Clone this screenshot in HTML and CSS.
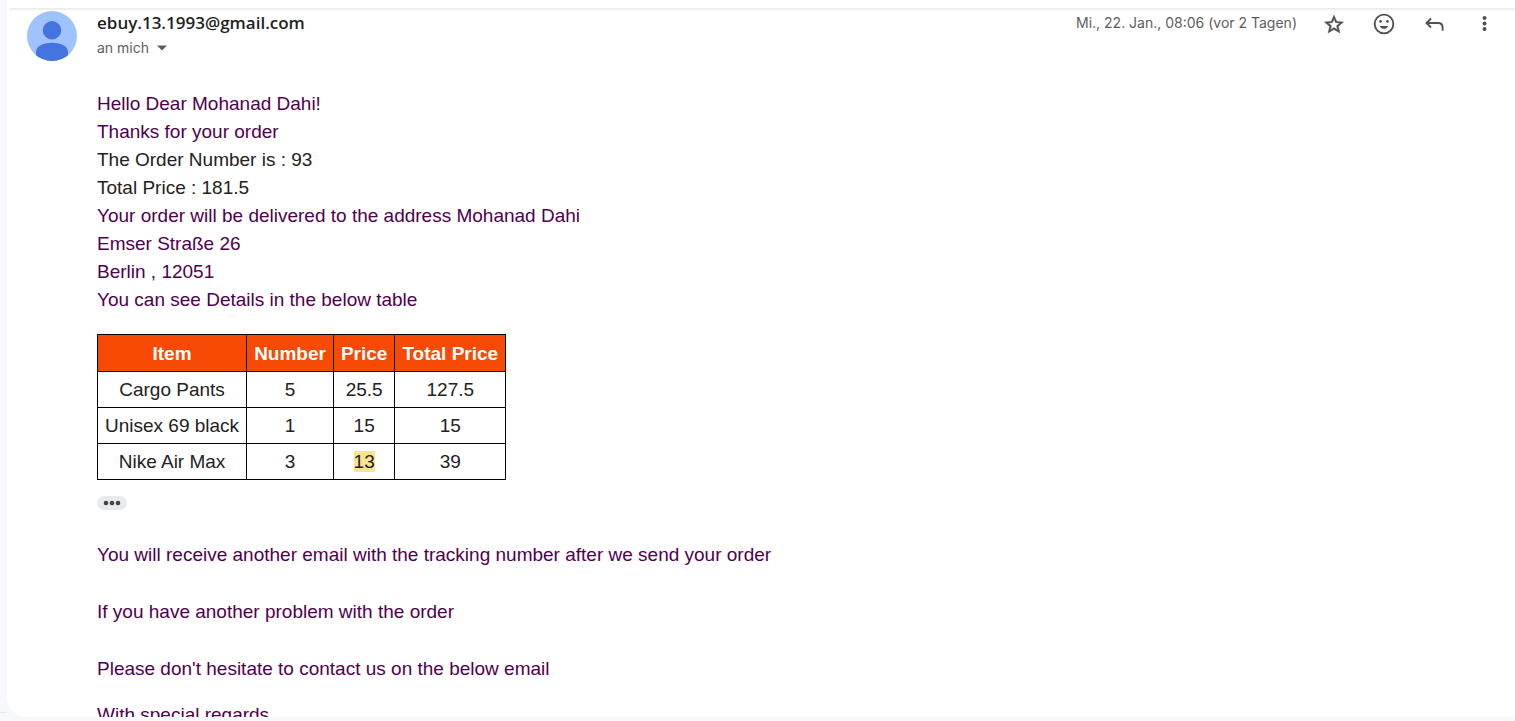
FILE: index.html
```html
<!DOCTYPE html>
<html lang="de">
<head>
<meta charset="utf-8">
<meta name="viewport" content="width=device-width, initial-scale=1">
<title>E-Mail</title>
<link rel="stylesheet" href="styles.css">
</head>
<body>
<div class="app">
  <div class="rail"></div>
  <main class="card">
    <div class="toolbar-edge"></div>
    <article class="message">
      <svg class="avatar" viewBox="0 0 50 50" aria-hidden="true">
        <defs><clipPath id="disc"><circle cx="25" cy="25" r="25"/></clipPath></defs>
        <g clip-path="url(#disc)">
          <rect width="50" height="50" fill="#a0c3ff"/>
          <circle cx="25" cy="19.2" r="9.2" fill="#4374e0"/>
          <path d="M9 50V41.500C9 34.500 17 31.700 25 31.700S41 34.500 41 41.500V50Z" fill="#4374e0"/>
        </g>
      </svg>
      <div class="content">
        <header class="header">
          <div class="sender">
            <h1 class="sender-name">ebuy.13.1993@gmail.com</h1>
            <button class="recipient" type="button">an mich
              <svg class="caret" viewBox="0 0 10 6" aria-hidden="true"><path d="M0 .5H10L5 5.500Z"/></svg>
            </button>
          </div>
          <div class="meta">
            <time class="date">Mi., 22. Jan., 08:06 (vor 2 Tagen)</time>
            <button class="icon-button" type="button" aria-label="Markieren">
              <svg class="icon" viewBox="0 0 24 24"><path stroke="currentColor" stroke-width=".5" d="m21.500 10-6.700-.6L12 3.200 9.200 9.400 2.500 10l5.100 4.400L6.100 21 12 17.500 17.900 21l-1.530-6.600zM12 15.600l-3.500 2.100.93-4-3.100-2.700 4.100-.36L12 6.900l1.600 3.740 4.100.36-3.100 2.700.93 4z"/></svg>
            </button>
            <button class="icon-button" type="button" aria-label="Reaktion hinzufügen">
              <svg class="icon" viewBox="0 0 24 24"><path fill-rule="evenodd" d="M12 1.700a10.300 10.300 0 1 0 0 20.600 10.300 10.300 0 0 0 0-20.600ZM12 3.600a8.400 8.400 0 1 1 0 16.800 8.400 8.400 0 0 1 0-16.800Z"/><circle cx="8.500" cy="9.400" r="1.300"/><circle cx="15.500" cy="9.400" r="1.300"/><path d="M7.700 14H16.300C15.500 15.900 14 16.800 12 16.800S8.500 15.900 7.700 14Z"/></svg>
            </button>
            <button class="icon-button" type="button" aria-label="Antworten">
              <svg class="icon" viewBox="0 0 24 24"><path d="M9 6.500 4.500 11 9 15.500M5 11H16Q20.600 11 20.600 15.500V18.800" fill="none" stroke="currentColor" stroke-width="1.900"/></svg>
            </button>
            <button class="icon-button" type="button" aria-label="Mehr">
              <svg class="icon" viewBox="0 0 24 24"><circle cx="12.500" cy="6" r="2"/><circle cx="12.500" cy="11.500" r="2"/><circle cx="12.500" cy="17" r="2"/></svg>
            </button>
          </div>
        </header>
        <div class="body">
          <p class="line quoted">Hello Dear Mohanad Dahi!</p>
          <p class="line quoted">Thanks for your order</p>
          <p class="line">The Order Number is : 93</p>
          <p class="line">Total Price : 181.5</p>
          <p class="line quoted">Your order will be delivered to the address Mohanad Dahi</p>
          <p class="line quoted">Emser Straße 26</p>
          <p class="line quoted">Berlin , 12051</p>
          <p class="line quoted">You can see Details in the below table</p>
          <table class="order">
            <thead><tr><th>Item</th><th>Number</th><th>Price</th><th>Total Price</th></tr></thead>
            <tbody>
              <tr><td>Cargo Pants</td><td>5</td><td>25.5</td><td>127.5</td></tr>
              <tr><td>Unisex 69 black</td><td>1</td><td>15</td><td>15</td></tr>
              <tr><td>Nike Air Max</td><td>3</td><td><mark class="hit">13</mark></td><td>39</td></tr>
            </tbody>
          </table>
          <button class="trim" type="button" aria-label="Gekürzten Inhalt einblenden">
            <svg class="trim-dots" viewBox="0 0 18 6" aria-hidden="true"><circle cx="3" cy="3" r="2.300"/><circle cx="9" cy="3" r="2.300"/><circle cx="15" cy="3" r="2.300"/></svg>
          </button>
          <div class="closing">
            <p class="line quoted">You will receive another email with the tracking number after we send your order</p>
            <p class="line quoted">If you have another problem with the order</p>
            <p class="line quoted">Please don't hesitate to contact us on the below email</p>
          </div>
          <p class="line quoted regards">With special regards</p>
        </div>
      </div>
    </article>
  </main>
</div>
</body>
</html>
```
FILE: styles.css
```css
* {
  box-sizing: border-box;
}

body {
  margin: 0;
  background: #f6f8fc;
  color: #222;
  font-family: "Liberation Sans", Arial, sans-serif;
}

button {
  border: 0;
  padding: 0;
  background: none;
  color: inherit;
  font: inherit;
  cursor: pointer;
}

h1,
p {
  margin: 0;
}

.app {
  display: flex;
  height: 100vh;
  padding-bottom: 4px;
}

.rail {
  flex: none;
  align-self: flex-end;
  width: 7px;
  height: 5px;
  border-top: 1px solid #e6e8ec;
}

.card {
  flex: 1;
  min-width: 0;
  overflow: hidden;
  background: #fff;
  border-bottom-left-radius: 20px;
}

.toolbar-edge {
  height: 11px;
  margin-left: 3px;
  background: linear-gradient(#fff 8px, #e8e8e8 8px, #efefef 9px, #fff 11px);
}

.message {
  display: flex;
  gap: 20px;
  padding: 0 6px 0 20px;
}

.avatar {
  flex: none;
  width: 50px;
  height: 50px;
}

.content {
  flex: 1;
  min-width: 0;
}

.header {
  display: flex;
  justify-content: space-between;
  align-items: flex-start;
  color: #5e5e5e;
  font-family: Inter, "Open Sans", sans-serif;
}

.sender-name {
  color: #1f1f1f;
  font-family: "Open Sans", sans-serif;
  font-size: 17px;
  font-weight: 700;
  font-weight: 600;
  line-height: 24px;
}

.recipient {
  display: flex;
  align-items: center;
  gap: 8px;
  font-size: 14px;
  line-height: 26px;
}

.caret {
  width: 10px;
  height: 6px;
  fill: currentColor;
}

.meta {
  display: flex;
  align-items: flex-start;
}

.date {
  margin-right: 12px;
  font-size: 14px;
  line-height: 24px;
}

.icon-button {
  display: grid;
  place-items: center;
  width: 50px;
  height: 26px;
  color: #505352;
}

.icon {
  width: 24px;
  height: 24px;
  fill: currentColor;
}

.body {
  padding-top: 29px;
  font-size: 19px;
}

.line {
  line-height: 28px;
}

.quoted {
  color: #500050;
}

.order {
  margin-top: 20px;
  border-collapse: collapse;
  line-height: 21px;
  text-align: center;
}

.order th,
.order td {
  height: 36px;
  padding: 7px;
  border: 1px solid #000;
}

.order th {
  height: 37px;
  background: #f74a04;
  color: #fff;
  font-weight: 700;
}

.hit {
  background: #fde293;
  color: inherit;
}

.trim {
  display: grid;
  place-items: center;
  width: 30px;
  height: 14px;
  margin-top: 16px;
  border-radius: 7px;
  background: #e8eaed;
}

.trim-dots {
  width: 18px;
  height: 6px;
  fill: #444746;
}

.closing {
  display: grid;
  gap: 29px;
  margin-top: 31px;
}

.regards {
  margin-top: 18px;
}
```
